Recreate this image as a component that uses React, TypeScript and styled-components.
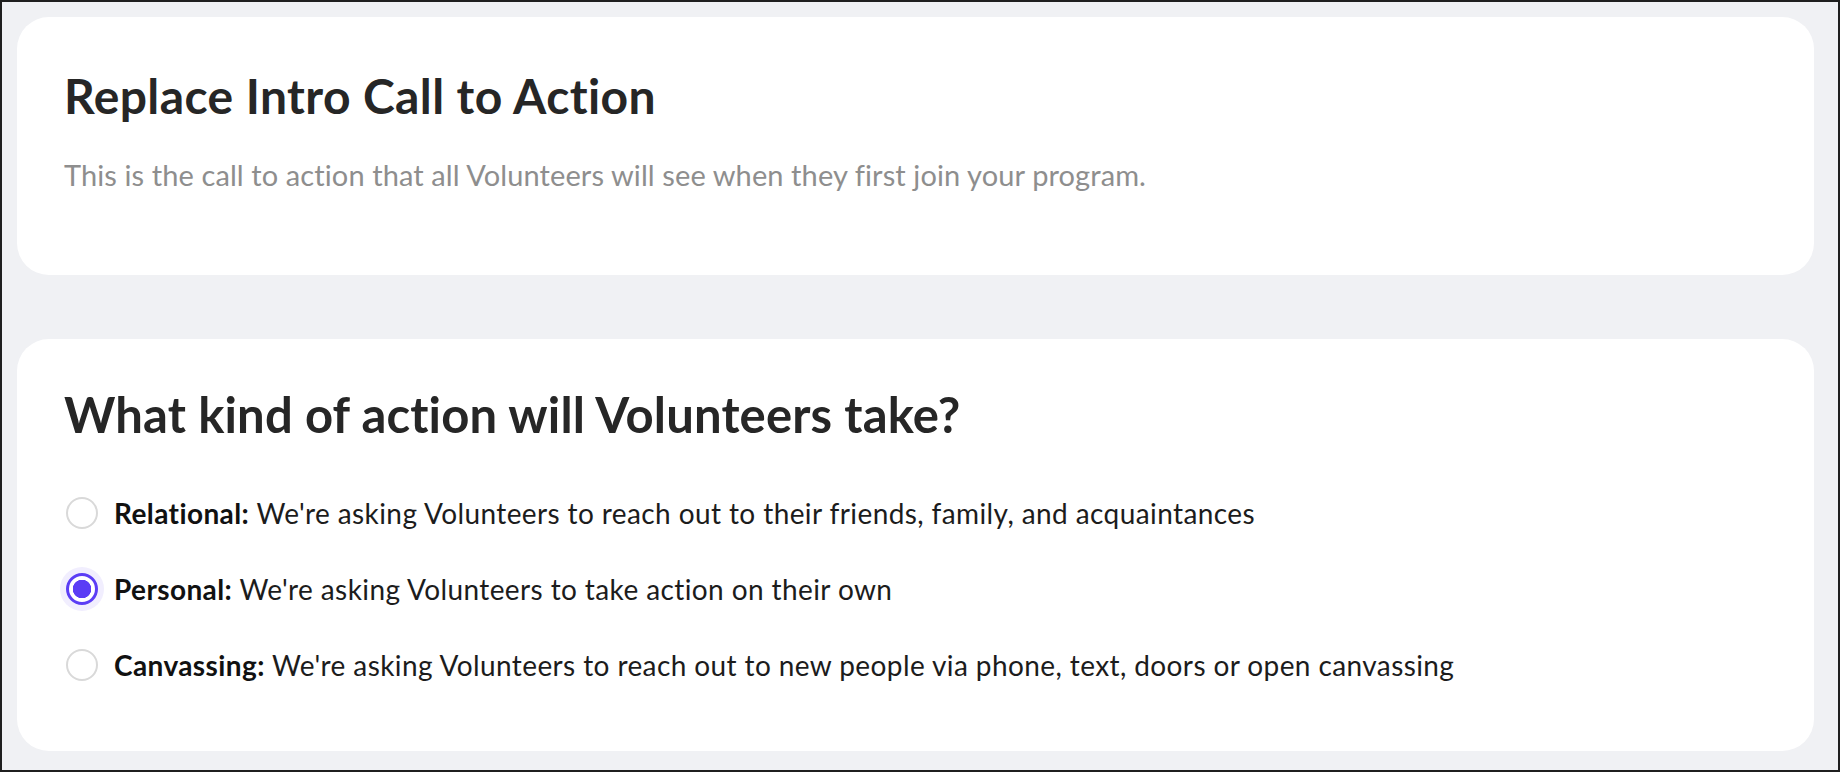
import styled, { createGlobalStyle } from "styled-components";
import { useState } from "react";

const GlobalStyle = createGlobalStyle`
  html, body {
    margin: 0;
    padding: 0;
    background: #f0f1f4;
  }
  * {
    box-sizing: border-box;
  }
`;

const Frame = styled.div`
  width: 1840px;
  height: 772px;
  border: 2px solid #1f1f1f;
  background: #f0f1f4;
  padding: 15px 24px 0 15px;
  display: flex;
  flex-direction: column;
  gap: 64px;
  font-family: Lato, "Noto Sans", sans-serif;
  overflow: hidden;
`;

const Card = styled.section<{ $top: number; $bottom: number }>`
  background: #ffffff;
  border-radius: 32px;
  padding: ${(p) => p.$top}px 48px ${(p) => p.$bottom}px 47px;
`;

const Title = styled.h2<{ $size: number; $spacing: number }>`
  margin: 0;
  font-size: ${(p) => p.$size}px;
  line-height: 56px;
  font-weight: 700;
  color: #262626;
  letter-spacing: ${(p) => p.$spacing}px;
`;

const Subtitle = styled.p`
  margin: 33px 0 0;
  font-size: 29px;
  line-height: 36px;
  color: #8e8e8e;
  letter-spacing: 0.1px;
`;

const Options = styled.div`
  margin-top: 49px;
  display: flex;
  flex-direction: column;
  gap: 32px;
`;

const Option = styled.label`
  display: flex;
  align-items: center;
  height: 44px;
  gap: 16px;
  padding-left: 2px;
  font-size: 28px;
  letter-spacing: 0.4px;
  color: #1c1c1c;
  cursor: pointer;
`;

const Radio = styled.input`
  appearance: none;
  margin: 0;
  flex: 0 0 auto;
  width: 32px;
  height: 32px;
  border-radius: 50%;
  border: 2px solid #d9d9d9;
  background: #fff;
  cursor: pointer;
  &:checked {
    border: 3px solid #5b3df5;
    box-shadow: 0 0 0 6px #f1eefe;
    background: radial-gradient(circle, #5b3df5 0 9px, #fff 9.5px);
  }
`;

const Label = styled.b`
  font-weight: 700;
  color: #111;
`;

const options = [
  {
    id: "relational",
    label: "Relational:",
    text: "We're asking Volunteers to reach out to their friends, family, and acquaintances",
  },
  {
    id: "personal",
    label: "Personal:",
    text: "We're asking Volunteers to take action on their own",
  },
  {
    id: "canvassing",
    label: "Canvassing:",
    text: "We're asking Volunteers to reach out to new people via phone, text, doors or open canvassing",
  },
];

function App() {
  const [kind, setKind] = useState("personal");

  return (
    <>
      <GlobalStyle />
      <Frame>
        <Card $top={51} $bottom={82}>
          <Title $size={48} $spacing={0.4}>
            Replace Intro Call to Action
          </Title>
          <Subtitle>
            This is the call to action that all Volunteers will see when they first join your program.
          </Subtitle>
        </Card>
        <Card $top={47} $bottom={64}>
          <Title $size={49} $spacing={0.15}>
            What kind of action will Volunteers take?
          </Title>
          <Options>
            {options.map((o) => (
              <Option key={o.id}>
                <Radio
                  type="radio"
                  name="kind"
                  checked={kind === o.id}
                  onChange={() => setKind(o.id)}
                />
                <span>
                  <Label>{o.label}</Label> {o.text}
                </span>
              </Option>
            ))}
          </Options>
        </Card>
      </Frame>
    </>
  );
}

export default App;
